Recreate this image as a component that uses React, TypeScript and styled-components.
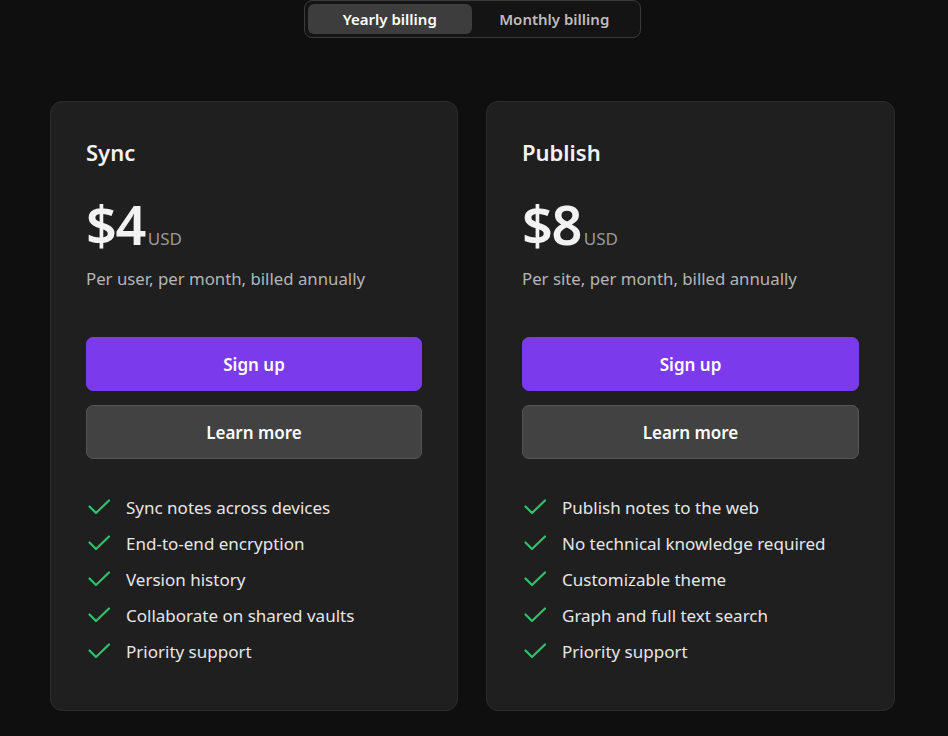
import React from 'react';
import styled, { createGlobalStyle } from 'styled-components';

const GlobalStyle = createGlobalStyle`
  * {
    box-sizing: border-box;
  }
  body {
    margin: 0;
    background: #0f0f0f;
    font-family: 'Noto Sans', 'Open Sans', sans-serif;
    color: #f0f0f0;
  }
`;

type Plan = {
  name: string;
  price: string;
  note: string;
  features: string[];
};

const plans: Plan[] = [
  {
    name: 'Sync',
    price: '$4',
    note: 'Per user, per month, billed annually',
    features: [
      'Sync notes across devices',
      'End-to-end encryption',
      'Version history',
      'Collaborate on shared vaults',
      'Priority support',
    ],
  },
  {
    name: 'Publish',
    price: '$8',
    note: 'Per site, per month, billed annually',
    features: [
      'Publish notes to the web',
      'No technical knowledge required',
      'Customizable theme',
      'Graph and full text search',
      'Priority support',
    ],
  },
];

const CheckIcon = () => (
  <svg width="24" height="24" viewBox="0 0 24 24" fill="none" stroke="#2fc26b" strokeWidth="2.2" strokeLinecap="round" strokeLinejoin="round">
    <path d="M23 5.5 10 18 3.5 11.5" />
  </svg>
);

const App = () => {
  const [billing, setBilling] = React.useState<'yearly' | 'monthly'>('yearly');

  return (
    <Page>
      <GlobalStyle />
      <Toggle>
        <ToggleButton active={billing === 'yearly'} onClick={() => setBilling('yearly')}>
          Yearly billing
        </ToggleButton>
        <ToggleButton active={billing === 'monthly'} onClick={() => setBilling('monthly')}>
          Monthly billing
        </ToggleButton>
      </Toggle>
      <Cards>
        {plans.map((plan) => (
          <Card key={plan.name}>
            <Name>{plan.name}</Name>
            <PriceRow>
              <Amount>{plan.price}</Amount>
              <Currency>USD</Currency>
            </PriceRow>
            <Note>{plan.note}</Note>
            <Actions>
              <Button primary>Sign up</Button>
              <Button>Learn more</Button>
            </Actions>
            <Features>
              {plan.features.map((feature) => (
                <Feature key={feature}>
                  <CheckIcon />
                  <span>{feature}</span>
                </Feature>
              ))}
            </Features>
          </Card>
        ))}
      </Cards>
    </Page>
  );
};

export default App;

const Page = styled.main`
  display: flex;
  flex-direction: column;
  align-items: center;
  min-height: 100vh;
`;

const Toggle = styled.div`
  display: flex;
  width: 337px;
  height: 38px;
  padding: 3px;
  border: 1px solid #3a3a3a;
  border-radius: 8px;
  background: #141414;
  margin-left: -4px;
`;

const ToggleButton = styled.button<{ active?: boolean }>`
  flex: 1;
  border: none;
  border-radius: 6px;
  background: ${(p) => (p.active ? '#3d3d3d' : 'transparent')};
  color: ${(p) => (p.active ? '#ffffff' : '#bdbdbd')};
  font-family: inherit;
  font-size: 15px;
  font-weight: 600;
  cursor: pointer;
`;

const Cards = styled.div`
  display: grid;
  grid-template-columns: 408px 409px;
  gap: 28px;
  margin-top: 63px;
  margin-left: -3px;
`;

const Card = styled.section`
  display: flex;
  flex-direction: column;
  height: 610px;
  padding: 34px 35px 0;
  background: #1f1f1f;
  border: 1px solid #2c2c2c;
  border-radius: 12px;
`;

const Name = styled.h2`
  margin: 0;
  font-size: 22px;
  font-weight: 600;
  line-height: 32px;
  color: #f2f2f2;
`;

const PriceRow = styled.div`
  display: flex;
  align-items: baseline;
  gap: 3px;
  margin-top: 24px;
`;

const Amount = styled.span`
  font-size: 54px;
  font-weight: 600;
  line-height: 64px;
  letter-spacing: -1.5px;
  color: #f2f2f2;
`;

const Currency = styled.span`
  font-size: 17px;
  color: #9a9a9a;
`;

const Note = styled.p`
  margin: 10px 0 0;
  font-size: 16.8px;
  line-height: 26px;
  color: #b5b5b5;
`;

const Actions = styled.div`
  display: flex;
  flex-direction: column;
  gap: 14px;
  margin-top: 45px;
`;

const Button = styled.button<{ primary?: boolean }>`
  height: 54px;
  border-radius: 7px;
  border: 1px solid ${(p) => (p.primary ? '#7c3aed' : '#555555')};
  background: ${(p) => (p.primary ? '#7c3aed' : '#424242')};
  color: #ffffff;
  font-family: inherit;
  font-size: 17px;
  font-weight: 600;
  cursor: pointer;
`;

const Features = styled.ul`
  display: flex;
  flex-direction: column;
  gap: 10px;
  margin: 35px 0 0;
  padding: 0;
  list-style: none;
`;

const Feature = styled.li`
  display: flex;
  align-items: center;
  gap: 16px;
  height: 26px;
  font-size: 17px;
  color: #e6e6e6;
`;
